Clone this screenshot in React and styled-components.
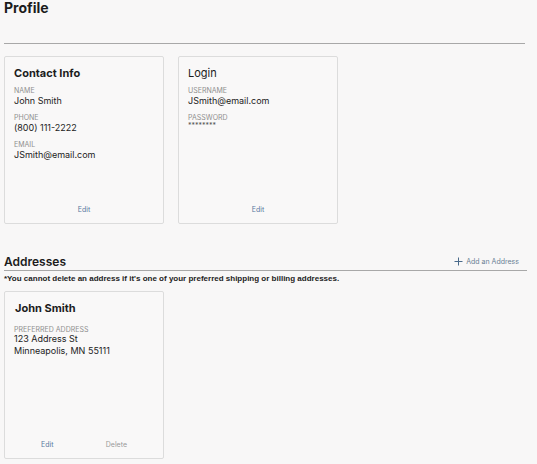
import React from "react";
import styled, { createGlobalStyle } from "styled-components";

const GlobalStyle = createGlobalStyle`
  body {
    margin: 0;
    background: #f8f7f7;
    font-family: "Inter", "Liberation Sans", sans-serif;
    color: #1c1c1c;
  }
`;

export default function App() {
  return (
    <>
      <GlobalStyle />
      <Page>
        <PageTitle>Profile</PageTitle>
        <Rule />
        <CardRow>
          <Card>
            <CardTitle>Contact Info</CardTitle>
            <Label>Name</Label>
            <Value>John Smith</Value>
            <Label>Phone</Label>
            <Value>(800) 111-2222</Value>
            <Label>Email</Label>
            <Value>JSmith@email.com</Value>
            <Actions>
              <ActionLink>Edit</ActionLink>
            </Actions>
          </Card>
          <Card>
            <CardTitle $light>Login</CardTitle>
            <Label>Username</Label>
            <Value>JSmith@email.com</Value>
            <Label>Password</Label>
            <Masked>********</Masked>
            <Actions>
              <ActionLink>Edit</ActionLink>
            </Actions>
          </Card>
        </CardRow>

        <SectionHeader>
          <SectionTitle>Addresses</SectionTitle>
          <AddButton>
            <svg width="9" height="9" viewBox="0 0 9 9">
              <path d="M4.5 0.5v8M0.5 4.5h8" stroke="#4a6a8a" strokeWidth="1" />
            </svg>
            Add an Address
          </AddButton>
        </SectionHeader>
        <Note>
          *You cannot delete an address if it's one of your preferred shipping or
          billing addresses.
        </Note>
        <CardRow $tight>
          <Card>
            <CardTitle $spaced>John Smith</CardTitle>
            <Label>Preferred Address</Label>
            <Value $close>123 Address St</Value>
            <Value>Minneapolis, MN 55111</Value>
            <Actions $split>
              <ActionLink>Edit</ActionLink>
              <ActionLink $muted>Delete</ActionLink>
            </Actions>
          </Card>
        </CardRow>
      </Page>
    </>
  );
}

const Page = styled.div`
  padding: 0 12px 0 4px;
  display: flex;
  flex-direction: column;
`;

const PageTitle = styled.h1`
  margin: 0;
  font-size: 14px;
  font-weight: 700;
  line-height: 16px;
`;

const Rule = styled.div`
  margin-top: 27px;
  height: 1px;
  background: #a8a8a8;
`;

const CardRow = styled.div`
  display: flex;
  gap: 14px;
  margin-top: ${(p) => (p.$tight ? "7px" : "12px")};
`;

const Card = styled.div`
  box-sizing: border-box;
  width: 160px;
  height: 168px;
  border: 1px solid #dcdcdc;
  border-radius: 2px;
  background: #f9f8f8;
  padding: 9px 9px 0 9px;
  display: flex;
  flex-direction: column;
`;

const CardTitle = styled.div`
  font-size: 11px;
  font-weight: ${(p) => (p.$light ? 400 : 700)};
  line-height: 14px;
  margin-bottom: ${(p) => (p.$spaced ? "4px" : "0")};
  padding-left: ${(p) => (p.$spaced ? "1px" : "0")};
`;

const Label = styled.div`
  font-size: 7px;
  text-transform: uppercase;
  color: #8f8f8f;
  line-height: 9px;
  margin-top: 6px;
`;

const Value = styled.div`
  font-size: 9px;
  line-height: 12px;
  color: #222;
  margin-top: ${(p) => (p.$close ? "-1px" : "0")};
`;

const Masked = styled.div`
  font-size: 7px;
  line-height: 8px;
  color: #555;
`;

const Actions = styled.div`
  margin-top: auto;
  height: 18px;
  display: flex;
  justify-content: ${(p) => (p.$split ? "space-between" : "center")};
  padding: ${(p) => (p.$split ? "0 27px" : "0")};
`;

const ActionLink = styled.span`
  font-size: 7px;
  color: ${(p) => (p.$muted ? "#9a9a9a" : "#5878a0")};
  cursor: pointer;
`;

const SectionHeader = styled.div`
  margin-top: 31px;
  display: flex;
  align-items: flex-end;
  justify-content: space-between;
  border-bottom: 1px solid #a8a8a8;
  padding-bottom: 1px;
  margin-right: -2px;
`;

const SectionTitle = styled.h2`
  margin: 0;
  font-size: 12px;
  font-weight: 600;
  line-height: 14px;
`;

const AddButton = styled.span`
  display: flex;
  align-items: center;
  gap: 3px;
  font-size: 7px;
  color: #6a7f94;
  margin-right: 8px;
  padding-bottom: 3px;
`;

const Note = styled.div`
  font-family: "Liberation Sans", sans-serif;
  font-size: 8px;
  font-weight: 700;
  line-height: 10px;
  margin-top: 3px;
  color: #222;
`;
